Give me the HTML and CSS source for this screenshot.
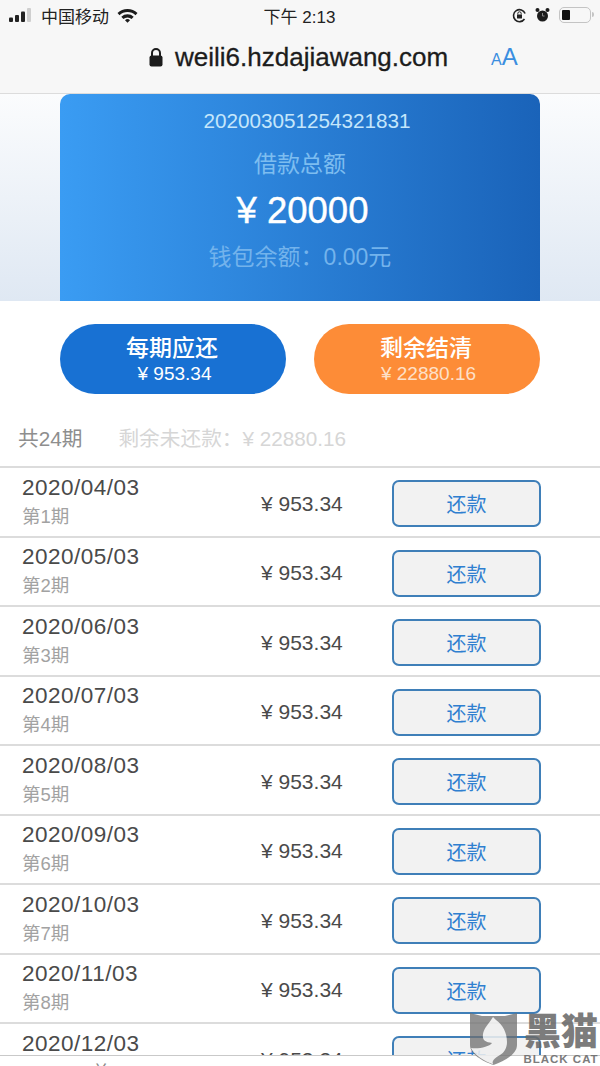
FILE: index.html
```html
<!DOCTYPE html>
<html lang="en">
<head>
  <meta charset="UTF-8" />
  <title>weili6.hzdajiawang.com</title>
  <link rel="stylesheet" href="styles.css">
</head>
<body>
  <div class="phone">
    <!-- Browser chrome -->
    <header class="chrome">
      <div class="status-bar">
        <div class="status-left">
          <svg class="signal" width="23" height="14" viewBox="0 0 23 14"><rect x="0" y="9.500" width="4" height="4.500" rx="1" fill="#222"/><rect x="6" y="7" width="4" height="7" rx="1" fill="#222"/><rect x="12" y="3.500" width="4" height="10.500" rx="1" fill="#222"/><rect x="18" y="0" width="4" height="14" rx="1" fill="#cfcfcf"/></svg>
          <span>中国移动</span>
          <svg class="wifi" width="21" height="15" viewBox="0 0 21 15"><path d="M0.500 5a14.500 14.500 0 0 1 20 0l-2 2.200a11.500 11.500 0 0 0-16 0z" fill="#1c1c1c"/><path d="M4.300 8.800a9 9 0 0 1 12.400 0l-2.100 2.200a6 6 0 0 0-8.200 0z" fill="#1c1c1c"/><path d="M8 12.200a3.600 3.600 0 0 1 5 0l-2.500 2.600z" fill="#1c1c1c"/></svg>
        </div>
        <div class="status-time">下午 2:13</div>
        <div class="status-right">
          <svg width="15" height="15" viewBox="0 0 15 15"><path d="M12.500 11a6 6 0 1 1 .6-5.500" fill="none" stroke="#222" stroke-width="1.600"/><rect x="5" y="6.500" width="5" height="4" rx="0.500" fill="#222"/><path d="M5.800 6.500V5.500a1.700 1.700 0 0 1 3.400 0v1" fill="none" stroke="#222"/></svg>
          <svg width="15" height="16" viewBox="0 0 15 16"><circle cx="7.500" cy="9" r="5.500" fill="#1c1c1c"/><circle cx="2.500" cy="3" r="2" fill="#1c1c1c"/><circle cx="12.500" cy="3" r="2" fill="#1c1c1c"/><path d="M7.500 6v3h2" stroke="#888" fill="none"/></svg>
          <div class="battery"><div class="battery-fill"></div></div>
        </div>
      </div>
      <div class="url-bar">
        <svg class="lock" width="14" height="20" viewBox="0 0 14 20"><path d="M3 9V6a4 4 0 0 1 8 0v3" fill="none" stroke="#1c1c1c" stroke-width="2"/><rect x="0.500" y="8.500" width="13" height="11" rx="2" fill="#1c1c1c"/></svg>
        <span class="url">weili6.hzdajiawang.com</span>
        <span class="text-size"><small>A</small>A</span>
      </div>
    </header>

    <main class="page">
      <!-- Loan summary -->
      <section class="hero">
        <div class="card">
          <div class="card-no">202003051254321831</div>
          <div class="card-label">借款总额</div>
          <div class="card-total">¥ 20000</div>
          <div class="card-wallet">钱包余额：0.00元</div>
        </div>
      </section>

      <div class="actions">
        <div class="pill pill-blue"><b>每期应还</b><span>¥ 953.34</span></div>
        <div class="pill pill-orange"><b>剩余结清</b><span>¥ 22880.16</span></div>
      </div>

      <div class="summary">
        <span class="summary-count">共24期</span>
        <span class="summary-left">剩余未还款：¥ 22880.16</span>
      </div>

      <!-- Instalments -->
      <ul class="rows">
        <li class="row"><div class="row-date"><div>2020/04/03</div><small>第1期</small></div><div class="row-amount">¥ 953.34</div><button class="repay">还款</button></li>
        <li class="row"><div class="row-date"><div>2020/05/03</div><small>第2期</small></div><div class="row-amount">¥ 953.34</div><button class="repay">还款</button></li>
        <li class="row"><div class="row-date"><div>2020/06/03</div><small>第3期</small></div><div class="row-amount">¥ 953.34</div><button class="repay">还款</button></li>
        <li class="row"><div class="row-date"><div>2020/07/03</div><small>第4期</small></div><div class="row-amount">¥ 953.34</div><button class="repay">还款</button></li>
        <li class="row"><div class="row-date"><div>2020/08/03</div><small>第5期</small></div><div class="row-amount">¥ 953.34</div><button class="repay">还款</button></li>
        <li class="row"><div class="row-date"><div>2020/09/03</div><small>第6期</small></div><div class="row-amount">¥ 953.34</div><button class="repay">还款</button></li>
        <li class="row"><div class="row-date"><div>2020/10/03</div><small>第7期</small></div><div class="row-amount">¥ 953.34</div><button class="repay">还款</button></li>
        <li class="row"><div class="row-date"><div>2020/11/03</div><small>第8期</small></div><div class="row-amount">¥ 953.34</div><button class="repay">还款</button></li>
        <li class="row"><div class="row-date"><div>2020/12/03</div><small>第9期</small></div><div class="row-amount">¥ 953.34</div><button class="repay">还款</button></li>
      </ul>
    </main>
    <footer class="toolbar"><span class="toolbar-label">首</span></footer>

    <!-- Watermark -->
    <div class="watermark">
      <svg width="47" height="54" viewBox="0 0 47 54"><path d="M0 1l12 3h23l12-3v32c0 9-12 16-23.500 20C12 49 0 42 0 33z" fill="#6e6e6e" fill-opacity="0.85"/><path d="M23 5l3 3c7 5 11 13 11 22 0 6-3 11-7 13-6 3-9 7-6.500 9.500C14 49 4 43 1 36c8 1 18-1 21-5-6-1-10-2-9-9 1-6 5-9 10-17z" fill="#f4f4f4" fill-opacity="0.95"/></svg>
      <div class="watermark-text"><b>黑猫</b><span>BLACK CAT</span></div>
    </div>
  </div>
</body>
</html>
```

FILE: styles.css
```css
*{margin:0;padding:0;box-sizing:border-box;}
html,body{width:600px;height:1066px;overflow:hidden;background:#fff;
  font-family:"Liberation Sans","Noto Sans CJK SC",sans-serif;}

.phone{position:relative;width:600px;height:1066px;display:flex;flex-direction:column;overflow:hidden;}

/* browser chrome */
.chrome{height:94px;flex:none;background:#f7f7f7;border-bottom:1px solid #dcdcdc;}
.status-bar{height:30px;padding:0 9px;display:grid;grid-template-columns:1fr auto 1fr;align-items:center;color:#222;font-size:17px;}
.status-left{display:flex;align-items:center;gap:9px;}
.status-left .wifi{margin-left:-1px;}
.status-time{font-size:17px;padding-right:1px;}
.status-right{display:flex;align-items:center;justify-content:flex-end;gap:8px;}
.battery{position:relative;width:32px;height:16px;border:1.500px solid #c4c4c4;border-radius:5px;padding:2px;margin-left:1px;}
.battery::after{content:"";position:absolute;right:-4px;top:4px;width:2px;height:5px;background:#c4c4c4;border-radius:0 2px 2px 0;}
.battery-fill{width:8px;height:100%;background:#111;border-radius:1px;}

.url-bar{height:54px;padding-left:149px;display:flex;align-items:center;}
.lock{margin-right:12px;}
.url{font-size:26px;color:#1c1c1c;width:316px;-webkit-text-stroke:0.3px #1c1c1c;}
.text-size{color:#3a8ee0;font-size:24px;}
.text-size small{font-size:16px;}

/* hero */
.page{flex:1;min-height:0;overflow:hidden;background:#fff;}
.hero{height:207px;padding:0 60px;background:linear-gradient(180deg,#fbfcfd 0%,#dfe8f3 100%);}
.card{height:207px;border-radius:10px 10px 0 0;background:linear-gradient(90deg,#3a9cf3 0%,#1a63b9 100%);
  display:flex;flex-direction:column;align-items:center;}
.card-no{margin-top:13px;padding-left:14px;height:28px;line-height:28px;font-size:20.700px;color:#c4e6fb;}
.card-label{margin-top:14px;height:30px;line-height:30px;font-size:23px;color:#7dbdf0;}
.card-total{margin-top:10px;padding-left:5px;height:44px;line-height:44px;font-size:36.500px;color:#fff;-webkit-text-stroke:0.4px #fff;}
.card-wallet{margin-top:9px;height:30px;line-height:30px;font-size:23px;color:#73b3ec;}

/* action pills */
.actions{padding:23px 60px 0;display:flex;justify-content:space-between;}
.pill{width:226px;height:70px;border-radius:35px;display:flex;flex-direction:column;align-items:center;color:#fff;padding:10px 2px 0 0;}
.pill b{font-weight:500;font-size:23px;line-height:28px;}
.pill span{font-size:19px;line-height:24px;padding-left:5px;}
.pill-blue{background:#1871d3;}
.pill-orange{background:#fd8c37;}
.pill-orange span{color:#fde0c8;}

.summary{height:72px;padding:14px 18px 0;display:flex;align-items:center;gap:36px;font-size:20.700px;}
.summary-count{color:#8e8e8e;}
.summary-left{color:#d6d6d6;}

/* rows */
.rows{list-style:none;border-top:2px solid #dcdcdc;}
.row{height:69.500px;padding:0 59px 0 22px;display:flex;align-items:center;border-bottom:2px solid #dcdcdc;}
.row-date{width:238px;font-size:22.500px;letter-spacing:.5px;color:#4a4a4a;line-height:29px;}
.row-date small{display:block;font-size:18.500px;letter-spacing:0;color:#a2a2a2;line-height:29px;}
.row-amount{flex:1;padding:4px 0 0 1px;font-size:21px;color:#4a4a4a;}
.repay{width:149px;height:47px;margin-top:4px;border:2px solid #3f7fb8;border-radius:7px;background:#f2f2f2;color:#2f7fd0;
  font-family:inherit;font-size:20px;}

.toolbar{height:11px;flex:none;background:#fff;border-top:1px solid #c9c9c9;overflow:hidden;padding:7px 0 0 92px;font-size:18px;line-height:20px;color:#888;}
.toolbar-label{display:block;}

/* watermark */
.watermark{position:absolute;left:470px;top:1012px;display:flex;gap:7px;align-items:flex-start;color:#6a6a6a;opacity:.88;}
.watermark-text{display:flex;flex-direction:column;align-items:center;width:74px;padding-top:2px;}
.watermark-text b{font-size:37px;line-height:38px;font-weight:900;white-space:nowrap;}
.watermark-text span{font-size:11.500px;font-weight:bold;letter-spacing:1px;line-height:14px;white-space:nowrap;}
```
